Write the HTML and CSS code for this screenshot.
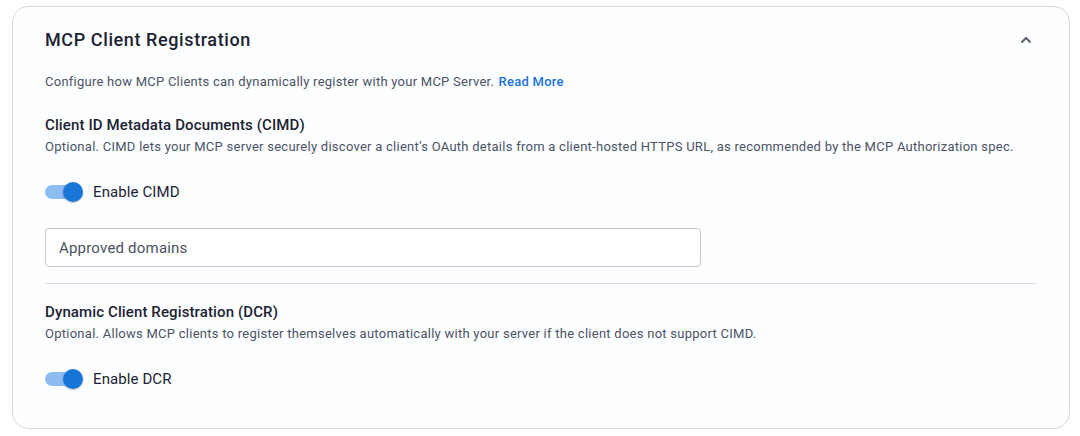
FILE: index.html
```html
<!DOCTYPE html>
<html lang="en">
<head>
    <meta charset="UTF-8">
    <meta name="viewport" content="width=device-width, initial-scale=1.0">
    <title>MCP Client Registration</title>
    <link rel="stylesheet" href="styles.css">
</head>
<body>

    <div class="card">
        <div class="card-header">
            <h2>MCP Client Registration</h2>
            <svg class="chevron" width="14" height="14" viewBox="0 0 14 14">
                <path d="M2.5 9.5 L7 5 L11.5 9.5" fill="none" stroke="#5c6370" stroke-width="2"/>
            </svg>
        </div>

        <p class="intro">Configure how MCP Clients can dynamically register with your MCP Server. <a href="#">Read More</a></p>

        <div class="section section-first">
            <h3>Client ID Metadata Documents (CIMD)</h3>
            <p class="hint">Optional. CIMD lets your MCP server securely discover a client’s OAuth details from a client-hosted HTTPS URL, as recommended by the MCP Authorization spec.</p>

            <label class="switch-row">
                <span class="switch"><span class="track"></span><span class="thumb"></span></span>
                Enable CIMD
            </label>

            <input type="text" class="field" placeholder="Approved domains">
        </div>

        <hr class="divider">

        <div class="section">
            <h3>Dynamic Client Registration (DCR)</h3>
            <p class="hint">Optional. Allows MCP clients to register themselves automatically with your server if the client does not support CIMD.</p>

            <label class="switch-row">
                <span class="switch"><span class="track"></span><span class="thumb"></span></span>
                Enable DCR
            </label>
        </div>
    </div>

</body>
</html>
```

FILE: styles.css
```css
body {
    margin: 0;
    padding: 6px 10px 6px 12px;
    background: #ffffff;
    font-family: 'Roboto', 'Liberation Sans', sans-serif;
    color: #1b2232;
}

.card {
    border: 1px solid #d6d8de;
    border-radius: 16px;
    background: #fdfeff;
    padding: 21px 32px 29px 32px;
    height: 371px;
}

.card-header {
    display: flex;
    justify-content: space-between;
    align-items: center;
    padding-right: 1px;
}

h2 {
    margin: 0;
    font-size: 18px;
    font-weight: 500;
    line-height: 24px;
    letter-spacing: 0.6px;
}

.chevron {
    margin-right: 3px;
}

.intro {
    margin: 20px 0 0 0;
    font-size: 13px;
    line-height: 20px;
    letter-spacing: 0.25px;
    color: #4a5366;
}

.intro a {
    color: #1a73d9;
    text-decoration: none;
    font-weight: 500;
    margin-left: 1px;
}

.section h3 {
    margin: 0;
    font-size: 15px;
    font-weight: 500;
    line-height: 23px;
    letter-spacing: 0.12px;
}

.section-first {
    margin-top: 22px;
}

.hint {
    margin: 0;
    font-size: 13px;
    line-height: 20px;
    letter-spacing: 0.26px;
    color: #4a5366;
}

.switch-row {
    display: flex;
    align-items: center;
    gap: 10px;
    margin-top: 25px;
    font-size: 15px;
    letter-spacing: 0.1px;
    color: #1b2232;
}

.switch {
    position: relative;
    width: 38px;
    height: 20px;
}

.switch .track {
    position: absolute;
    left: 0;
    top: 3px;
    width: 36px;
    height: 14px;
    border-radius: 7px;
    background: #8dbcf0;
}

.switch .thumb {
    position: absolute;
    right: 0;
    top: 0;
    width: 20px;
    height: 20px;
    border-radius: 50%;
    background: #1976d9;
    box-shadow: 0 1px 2px rgba(0, 0, 0, 0.25);
}

.field {
    display: block;
    margin-top: 26px;
    width: 656px;
    height: 39px;
    box-sizing: border-box;
    padding: 0 13px;
    border: 1px solid #c5c8ce;
    border-radius: 4px;
    background: #fff;
    font-family: inherit;
    font-size: 15px;
    letter-spacing: 0.2px;
}

.field::placeholder {
    color: #4a5160;
}

.divider {
    border: none;
    border-top: 1px solid #dcdee3;
    margin: 16px 0 17px 0;
}
```
